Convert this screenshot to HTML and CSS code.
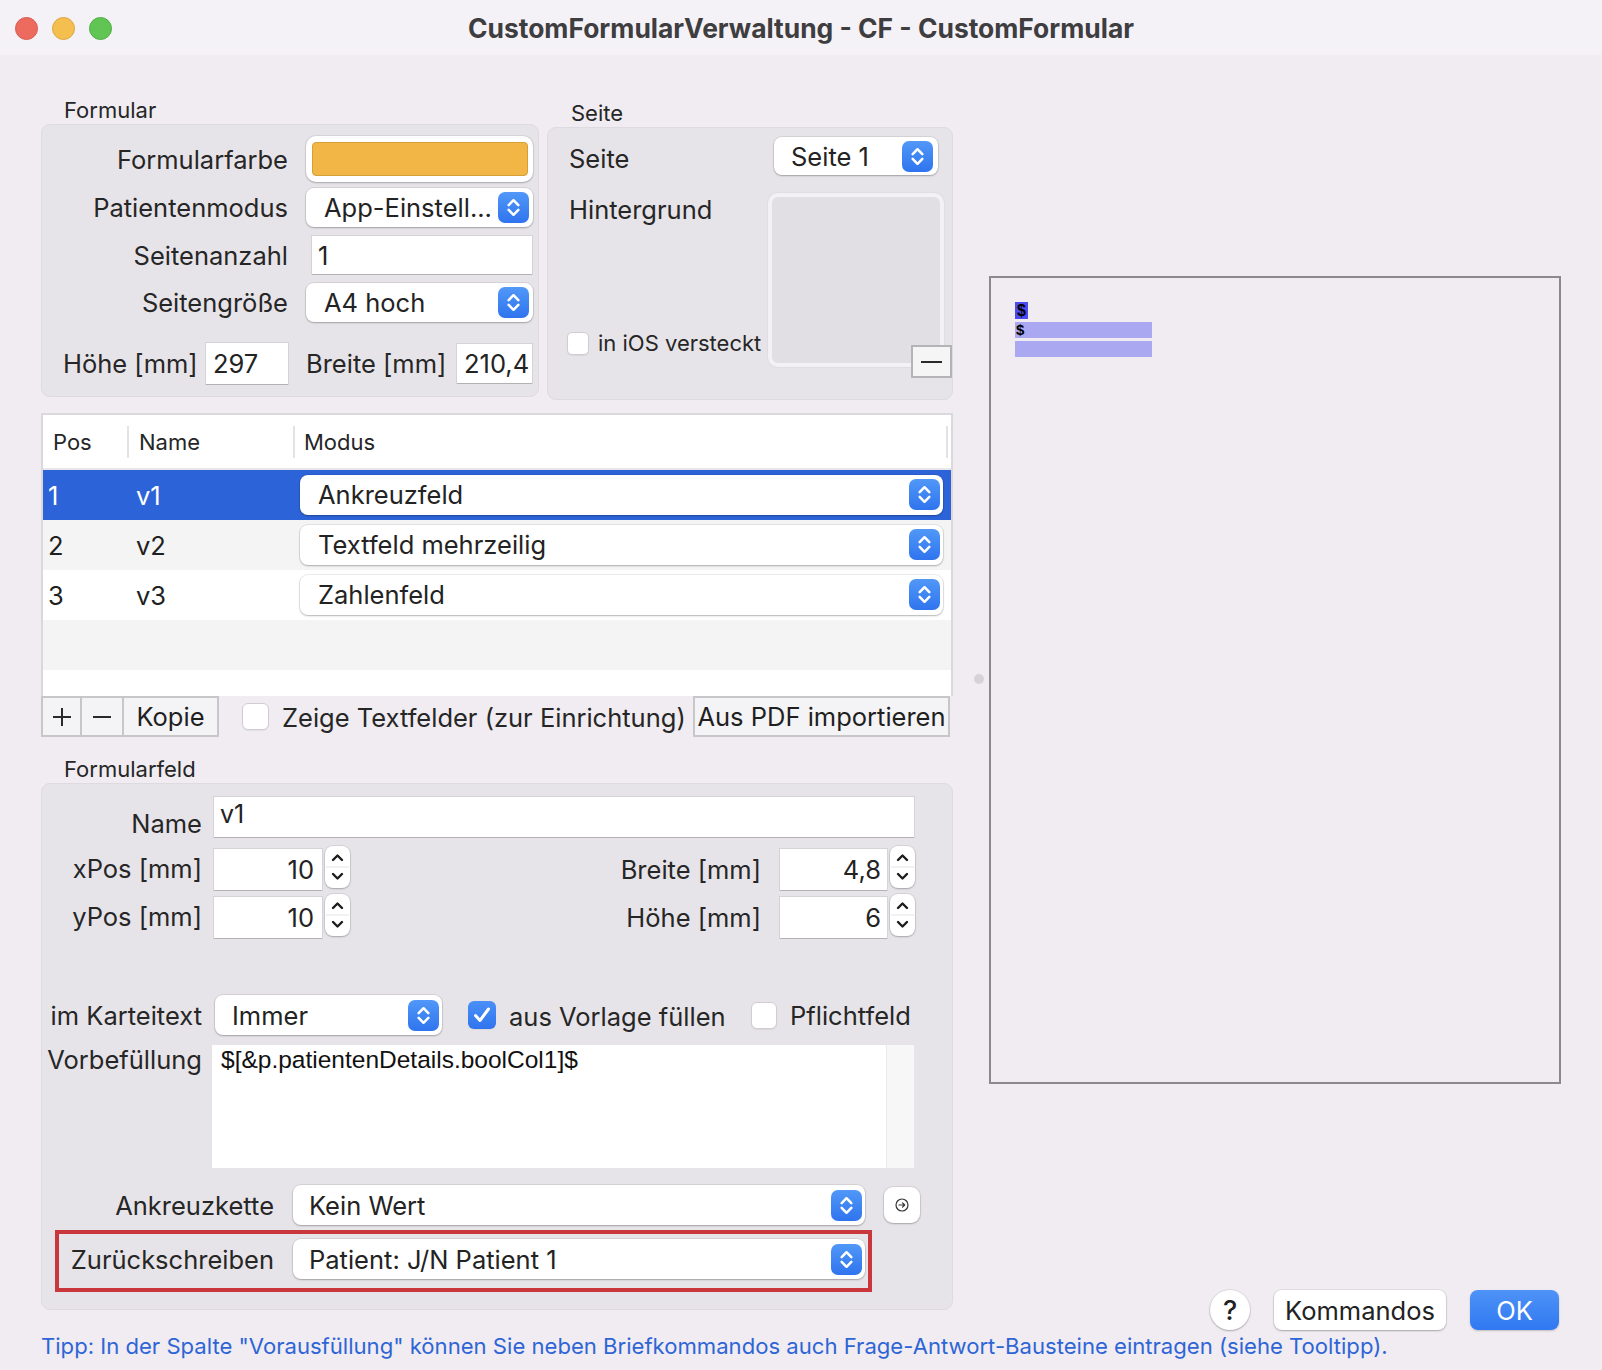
FILE: index.html
```html
<!DOCTYPE html>
<html lang="de">
<head>
<meta charset="utf-8">
<title>CustomFormularVerwaltung - CF - CustomFormular</title>
<link rel="stylesheet" href="styles.css">
</head>
<body>
<div class="window">
  <header class="titlebar">
    <div class="lights">
      <span class="light red"></span><span class="light yellow"></span><span class="light green"></span>
    </div>
    <div class="title">CustomFormularVerwaltung - CF - CustomFormular</div>
    <div></div>
  </header>

  <div class="content">
    <div class="leftcol">
      <div class="toprow">
        <section class="sec-formular">
          <div class="sec-label">Formular</div>
          <div class="box box-formular">
            <div class="frow r1"><span class="lbl">Formularfarbe</span><div class="ctl colorwell"><div class="swatch"></div></div></div>
            <div class="frow r2"><span class="lbl">Patientenmodus</span>
              <div class="ctl popup"><span class="ptxt">App-Einstell...</span><span class="arrows"><svg viewBox="0 0 32 32" width="31" height="31"><path d="M11 13.5 L16 8.5 L21 13.5 M11 18.5 L16 23.5 L21 18.5" fill="none" stroke="#fff" stroke-width="2.6" stroke-linecap="round" stroke-linejoin="round"/></svg></span></div>
            </div>
            <div class="frow r3"><span class="lbl">Seitenanzahl</span><div class="ctl tf tf-anz">1</div></div>
            <div class="frow r4"><span class="lbl">Seitengröße</span>
              <div class="ctl popup"><span class="ptxt">A4 hoch</span><span class="arrows"><svg viewBox="0 0 32 32" width="31" height="31"><path d="M11 13.5 L16 8.5 L21 13.5 M11 18.5 L16 23.5 L21 18.5" fill="none" stroke="#fff" stroke-width="2.6" stroke-linecap="round" stroke-linejoin="round"/></svg></span></div>
            </div>
            <div class="frow r5">
              <span class="lbl-h">Höhe [mm]</span>
              <div class="tf tf-h">297</div>
              <span class="lbl-b">Breite [mm]</span>
              <div class="tf tf-b">210,4</div>
            </div>
          </div>
        </section>

        <section class="sec-seite">
          <div class="sec-label sl-seite">Seite</div>
          <div class="box box-seite">
            <div class="seite-left">
              <span class="slbl">Seite</span>
              <span class="slbl slbl2">Hintergrund</span>
              <div class="ios"><span class="cb cb-small"></span><span>in iOS versteckt</span></div>
            </div>
            <div class="seite-right">
              <div class="popup seite-pop"><span class="ptxt">Seite 1</span><span class="arrows"><svg viewBox="0 0 32 32" width="31" height="31"><path d="M11 13.5 L16 8.5 L21 13.5 M11 18.5 L16 23.5 L21 18.5" fill="none" stroke="#fff" stroke-width="2.6" stroke-linecap="round" stroke-linejoin="round"/></svg></span></div>
              <div class="well">
                <div class="well-minus"><span class="mline"></span></div>
              </div>
            </div>
          </div>
        </section>
      </div>

      <div class="table">
        <div class="scroll">
          <div class="thead">
            <div class="th th-pos">Pos</div><span class="sep"></span>
            <div class="th th-name">Name</div><span class="sep"></span>
            <div class="th th-mod">Modus</div><span class="sep"></span>
          </div>
          <div class="trow sel">
            <div class="c-pos">1</div><div class="c-name">v1</div>
            <div class="c-mod"><div class="popup tpop"><span class="ptxt">Ankreuzfeld</span><span class="arrows"><svg viewBox="0 0 32 32" width="31" height="31"><path d="M11 13.5 L16 8.5 L21 13.5 M11 18.5 L16 23.5 L21 18.5" fill="none" stroke="#fff" stroke-width="2.6" stroke-linecap="round" stroke-linejoin="round"/></svg></span></div></div>
          </div>
          <div class="trow alt">
            <div class="c-pos">2</div><div class="c-name">v2</div>
            <div class="c-mod"><div class="popup tpop"><span class="ptxt">Textfeld mehrzeilig</span><span class="arrows"><svg viewBox="0 0 32 32" width="31" height="31"><path d="M11 13.5 L16 8.5 L21 13.5 M11 18.5 L16 23.5 L21 18.5" fill="none" stroke="#fff" stroke-width="2.6" stroke-linecap="round" stroke-linejoin="round"/></svg></span></div></div>
          </div>
          <div class="trow">
            <div class="c-pos">3</div><div class="c-name">v3</div>
            <div class="c-mod"><div class="popup tpop"><span class="ptxt">Zahlenfeld</span><span class="arrows"><svg viewBox="0 0 32 32" width="31" height="31"><path d="M11 13.5 L16 8.5 L21 13.5 M11 18.5 L16 23.5 L21 18.5" fill="none" stroke="#fff" stroke-width="2.6" stroke-linecap="round" stroke-linejoin="round"/></svg></span></div></div>
          </div>
          <div class="trow alt"></div>
        </div>
        <div class="tbar">
          <div class="bb bb-plus"><svg viewBox="0 0 20 20" width="20" height="20"><path d="M10 1 V19 M1 10 H19" stroke="#2a2a2a" stroke-width="2"/></svg></div>
          <div class="bb bb-minus"><svg viewBox="0 0 20 20" width="20" height="20"><path d="M1 10 H19" stroke="#2a2a2a" stroke-width="2"/></svg></div>
          <div class="bb bb-kopie">Kopie</div>
          <span class="cb cb-bar"></span>
          <span class="tbar-lbl">Zeige Textfelder (zur Einrichtung)</span>
          <div class="bb bb-pdf">Aus PDF importieren</div>
        </div>
      </div>

      <section class="sec-feld">
        <div class="sec-label">Formularfeld</div>
        <div class="box box-feld">
          <div class="nrow">
            <span class="flbl">Name</span>
            <div class="tf tf-name">v1</div>
          </div>
          <div class="posrow pr1">
            <span class="flbl">xPos [mm]</span>
            <div class="tf numf">10</div>
            <span class="stepper"><svg viewBox="0 0 25 42" width="25" height="42"><path d="M8 14 L12.5 9.5 L17 14 M8 28 L12.5 32.5 L17 28" fill="none" stroke="#1c1c1c" stroke-width="2.4" stroke-linecap="round" stroke-linejoin="round"/><path d="M1 21 H24" stroke="#e4e4e4" stroke-width="1"/></svg></span>
            <span class="flbl-r">Breite [mm]</span>
            <div class="tf numf numf2">4,8</div>
            <span class="stepper"><svg viewBox="0 0 25 42" width="25" height="42"><path d="M8 14 L12.5 9.5 L17 14 M8 28 L12.5 32.5 L17 28" fill="none" stroke="#1c1c1c" stroke-width="2.4" stroke-linecap="round" stroke-linejoin="round"/><path d="M1 21 H24" stroke="#e4e4e4" stroke-width="1"/></svg></span>
          </div>
          <div class="posrow pr2">
            <span class="flbl">yPos [mm]</span>
            <div class="tf numf">10</div>
            <span class="stepper"><svg viewBox="0 0 25 42" width="25" height="42"><path d="M8 14 L12.5 9.5 L17 14 M8 28 L12.5 32.5 L17 28" fill="none" stroke="#1c1c1c" stroke-width="2.4" stroke-linecap="round" stroke-linejoin="round"/><path d="M1 21 H24" stroke="#e4e4e4" stroke-width="1"/></svg></span>
            <span class="flbl-r">Höhe [mm]</span>
            <div class="tf numf numf2">6</div>
            <span class="stepper"><svg viewBox="0 0 25 42" width="25" height="42"><path d="M8 14 L12.5 9.5 L17 14 M8 28 L12.5 32.5 L17 28" fill="none" stroke="#1c1c1c" stroke-width="2.4" stroke-linecap="round" stroke-linejoin="round"/><path d="M1 21 H24" stroke="#e4e4e4" stroke-width="1"/></svg></span>
          </div>
          <div class="krow">
            <span class="flbl">im Karteitext</span>
            <div class="popup kpop"><span class="ptxt">Immer</span><span class="arrows"><svg viewBox="0 0 32 32" width="31" height="31"><path d="M11 13.5 L16 8.5 L21 13.5 M11 18.5 L16 23.5 L21 18.5" fill="none" stroke="#fff" stroke-width="2.6" stroke-linecap="round" stroke-linejoin="round"/></svg></span></div>
            <span class="cb cb-on"><svg viewBox="0 0 28 28" width="28" height="28"><path d="M7.5 14.5 L12 19.5 L20.5 8" fill="none" stroke="#fff" stroke-width="3" stroke-linecap="round" stroke-linejoin="round"/></svg></span>
            <span class="k-lbl">aus Vorlage füllen</span>
            <span class="cb cb-pf"></span>
            <span class="k-lbl2">Pflichtfeld</span>
          </div>
          <div class="vrow">
            <span class="flbl vlbl">Vorbefüllung</span>
            <div class="textarea">
              <div class="ta-text">$[&amp;p.patientenDetails.boolCol1]$</div>
              <div class="ta-scroll"></div>
            </div>
          </div>
          <div class="arow">
            <span class="albl">Ankreuzkette</span>
            <div class="popup apop"><span class="ptxt">Kein Wert</span><span class="arrows"><svg viewBox="0 0 32 32" width="31" height="31"><path d="M11 13.5 L16 8.5 L21 13.5 M11 18.5 L16 23.5 L21 18.5" fill="none" stroke="#fff" stroke-width="2.6" stroke-linecap="round" stroke-linejoin="round"/></svg></span></div>
            <div class="gobtn"><svg viewBox="0 0 16 16" width="16" height="16"><circle cx="8" cy="8" r="6" fill="none" stroke="#333" stroke-width="1.2"/><path d="M5 8 H10.5 M8.5 5.8 L10.7 8 L8.5 10.2" fill="none" stroke="#333" stroke-width="1.2" stroke-linecap="round" stroke-linejoin="round"/></svg></div>
          </div>
          <div class="redbox">
            <span class="albl rlbl">Zurückschreiben</span>
            <div class="popup apop"><span class="ptxt">Patient: J/N Patient 1</span><span class="arrows"><svg viewBox="0 0 32 32" width="31" height="31"><path d="M11 13.5 L16 8.5 L21 13.5 M11 18.5 L16 23.5 L21 18.5" fill="none" stroke="#fff" stroke-width="2.6" stroke-linecap="round" stroke-linejoin="round"/></svg></span></div>
          </div>
        </div>
      </section>
    </div>

    <div class="splitter"><span class="dot"></span></div>

    <div class="rightcol">
      <div class="preview">
        <div class="pv-sq">$</div>
        <div class="pv-bar pv-b1">$</div>
        <div class="pv-bar pv-b2"></div>
      </div>
      <div class="buttons">
        <div class="help">?</div>
        <div class="btn">Kommandos</div>
        <div class="btn btn-ok">OK</div>
      </div>
    </div>
  </div>

  <div class="tip">Tipp: In der Spalte "Vorausfüllung" können Sie neben Briefkommandos auch Frage-Antwort-Bausteine eintragen (siehe Tooltipp).</div>
</div>
</body>
</html>
```

FILE: styles.css
```css
* { box-sizing: border-box; }
html, body { margin: 0; padding: 0; }
body {
  width: 1602px;
  height: 1370px;
  overflow: hidden;
  background: #f0ecf1;
  font-family: Inter, "Noto Sans", "Liberation Sans", sans-serif;
  color: #262626;
}
.window { width: 1602px; height: 1370px; background: #f0ecf1; }

/* title bar */
.titlebar {
  height: 55px;
  background: #f5f2f7;
  display: grid;
  grid-template-columns: 1fr auto 1fr;
  align-items: center;
}
.lights { display: flex; gap: 14px; padding-left: 15px; padding-top: 1px; }
.light { width: 23px; height: 23px; border-radius: 50%; display: block; }
.red { background: #ed6a5e; border: 1px solid #d85b50; }
.yellow { background: #f5bf4f; border: 1px solid #dca540; }
.green { background: #61c554; border: 1px solid #51ad44; }
.title { font-size: 26.4px; font-weight: 700; color: #3e3d40; }

/* layout */
.content { display: flex; padding: 42px 0 0 41px; }
.leftcol { width: 912px; display: flex; flex-direction: column; }
.splitter { width: 36px; padding-top: 577px; }
.dot { display: block; width: 10px; height: 10px; border-radius: 50%; background: #d6d3d8; margin-left: 21px; }
.rightcol { width: 572px; display: flex; flex-direction: column; }

.toprow { display: flex; gap: 8px; }
.sec-formular { width: 498px; }
.sec-seite { width: 406px; margin-top: 3px; }
.sec-label { font-size: 22px; line-height: 26px; height: 26px; padding-left: 23px; margin-bottom: 1px; color: #262626; }
.sl-seite { padding-left: 24px; }

.box { background: #e7e4e9; border: 1px solid #dddae0; border-radius: 9px; }

/* Formular box */
.box-formular { height: 273px; padding-top: 11px; }
.frow { display: flex; align-items: center; }
.frow .lbl { width: 246px; text-align: right; font-size: 25.5px; white-space: nowrap; }
.frow .ctl { margin-left: 18px; width: 227px; height: 100%; }
.r1 { height: 46px; }
.r2 { height: 39px; margin-top: 6px; }
.r3 { height: 38px; margin-top: 9px; }
.r4 { height: 39px; margin-top: 9px; }
.r5 { height: 41px; margin-top: 21px; padding-left: 21px; font-size: 25.5px; }

.colorwell {
  background: #fff;
  border-radius: 10px;
  box-shadow: 0 0 0 1px rgba(0,0,0,0.06), 0 1px 2px rgba(0,0,0,0.22);
  padding: 6px 5px 6px 6px;
}
.swatch { width: 100%; height: 100%; background: #f1b646; border: 1px solid #d59f3a; border-radius: 4px; }

.popup {
  display: flex;
  align-items: center;
  background: #fff;
  border-radius: 8px;
  box-shadow: 0 0 0 1px rgba(0,0,0,0.07), 0 1px 2px rgba(0,0,0,0.24);
  padding-left: 18px;
  padding-right: 4px;
  font-size: 25.5px;
  color: #232323;
}
.ptxt { flex: 1; white-space: nowrap; overflow: hidden; }
.arrows {
  width: 31px; height: 31px; border-radius: 7px;
  background: linear-gradient(#5198f8, #2f74ee);
  display: block;
  flex: none;
}
.arrows svg { display: block; }

.tf {
  background: #fff;
  box-shadow: 0 0 0 1px rgba(0,0,0,0.07), 0 1px 0 rgba(0,0,0,0.16);
  font-size: 25.5px;
  display: flex;
  align-items: center;
  padding-left: 6px;
  color: #232323;
  white-space: nowrap;
}
.frow .tf-anz { margin-left: 24px; width: 220px; }
.lbl-h { width: 143px; white-space: nowrap; }
.tf-h { width: 82px; height: 41px; padding-left: 7px; }
.lbl-b { width: 139px; margin-left: 18px; white-space: nowrap; }
.tf-b { width: 75px; height: 39px; margin-left: 12px; padding-left: 7px; overflow: hidden; }

/* Seite box */
.box-seite { height: 273px; display: flex; }
.seite-left { flex: 1; padding-left: 21px; padding-top: 16px; display: flex; flex-direction: column; }
.slbl { font-size: 25.5px; line-height: 30px; white-space: nowrap; }
.slbl2 { margin-top: 21px; }
.ios { margin-top: 106px; margin-left: -2px; display: flex; align-items: center; gap: 9px; font-size: 22px; height: 24px; white-space: nowrap; }
.cb { display: block; background: #fff; border: 1px solid #cfcdd1; border-radius: 6px; box-shadow: 0 1px 1px rgba(0,0,0,0.06); flex: none; }
.cb-small { width: 22px; height: 23px; border-radius: 5px; }
.seite-right { width: 176px; margin-right: 8px; padding-top: 9px; }
.seite-pop { margin-left: 6px; width: 164px; height: 38px; padding-left: 17px; padding-right: 5px; }
.well {
  margin-top: 18px;
  height: 174px;
  position: relative;
  border-radius: 10px;
  background: #e1dfe3;
  border: 4px solid #f3f1f5;
  box-shadow: 0 0 0 1px #e0dde2;
}
.well-minus {
  position: absolute;
  left: 139px; top: 148px;
  width: 41px; height: 33px;
  background: #f5f5f6;
  border: 2px solid #b4b3b6;
  display: flex; align-items: center; justify-content: center;
}
.mline { display: block; width: 21px; height: 2px; background: #2a2a2a; }

/* table */
.table { margin-top: 13px; height: 324px; display: flex; flex-direction: column; }
.scroll {
  height: 283px;
  background: #fff;
  border: 2px solid #d9d8da;
  border-bottom: none;
  overflow: hidden;
}
.thead { height: 55px; display: flex; align-items: center; border-bottom: 2px solid #e7e6e8; font-size: 22px; }
.th { white-space: nowrap; }
.th-pos { width: 84px; padding-left: 10px; }
.th-name { width: 164px; padding-left: 10px; }
.th-mod { width: 651px; padding-left: 9px; }
.sep { display: block; width: 2px; height: 32px; background: #e3e2e4; }
.trow { height: 50px; display: flex; align-items: center; font-size: 25.5px; color: #1f1f1f; }
.trow.alt { background: #f4f4f5; }
.trow.sel { background: #2c63d8; color: #fff; }
.c-pos { width: 84px; padding-left: 5px; }
.c-name { width: 166px; padding-left: 9px; }
.c-mod { flex: 1; }
.tpop { margin-left: 7px; width: 643px; height: 40px; padding-right: 3px; padding-bottom: 1px; }

.tbar { height: 41px; display: flex; align-items: center; font-size: 25.5px; }
.bb {
  height: 41px;
  border: 2px solid #c7c6c9;
  background: #f4f3f5;
  display: flex; align-items: center; justify-content: center;
  color: #1f1f1f;
  white-space: nowrap;
}
.bb svg { display: block; }
.bb-plus { width: 41px; }
.bb-minus { width: 42px; border-left: none; }
.bb-kopie { width: 95px; border-left: none; }
.cb-bar { width: 27px; height: 27px; margin-left: 23px; }
.tbar-lbl { margin-left: 13px; white-space: nowrap; padding-top: 2px; }
.bb-pdf { width: 257px; margin-left: auto; margin-right: 3px; }

/* Formularfeld */
.sec-feld { margin-top: 19px; }
.box-feld { height: 527px; padding-top: 13px; font-size: 25.5px; }
.flbl { width: 160px; text-align: right; white-space: nowrap; flex: none; }
.nrow { display: flex; align-items: center; height: 40px; }
.nrow .flbl { padding-top: 12px; }
.tf-name { margin-left: 12px; width: 700px; height: 40px; align-items: flex-start; padding-top: 2px; font-size: 25px; }

.posrow { display: flex; height: 44px; align-items: center; }
.pr1 { margin-top: 9px; }
.pr2 { margin-top: 4px; }
.numf { margin-left: 12px; width: 108px; height: 41px; justify-content: flex-end; padding-right: 8px; align-self: flex-end; }
.numf2 { margin-left: 19px; width: 107px; padding-right: 6px; }
.stepper {
  display: block; width: 25px; height: 42px; margin-left: 3px;
  background: #fff; border-radius: 8px;
  box-shadow: 0 0 0 1px rgba(0,0,0,0.07), 0 1px 2px rgba(0,0,0,0.22);
  align-self: flex-start;
}
.stepper svg { display: block; }
.flbl-r { width: 200px; margin-left: 211px; text-align: right; white-space: nowrap; padding-top: 2px; }

.krow { display: flex; align-items: center; height: 40px; margin-top: 57px; }
.kpop { margin-left: 13px; width: 227px; height: 40px; padding-left: 17px; padding-right: 3px; }
.cb-on { width: 28px; height: 28px; margin-left: 26px; background: linear-gradient(#4a90f7, #2f74ee); border: none; border-radius: 6px; }
.cb-on svg { display: block; }
.k-lbl { width: 242px; margin-left: 13px; white-space: nowrap; padding-top: 3px; }
.cb-pf { width: 26px; height: 27px; }
.k-lbl2 { margin-left: 13px; white-space: nowrap; }

.vrow { display: flex; align-items: flex-start; margin-top: 10px; }
.vlbl { line-height: 30px; }
.textarea { margin-left: 10px; width: 702px; height: 123px; background: #fff; display: flex; }
.ta-text { flex: 1; font-size: 24.5px; line-height: 28px; padding-left: 9px; padding-top: 1px; color: #111; font-family: "Liberation Sans", Arial, sans-serif; }
.ta-scroll { width: 28px; background: #f7f7f7; border-left: 1px solid #ebebeb; }

.arow { display: flex; align-items: center; height: 40px; margin-top: 17px; }
.albl { width: 232px; text-align: right; white-space: nowrap; flex: none; }
.apop { margin-left: 19px; width: 572px; height: 40px; padding-left: 16px; padding-right: 3px; }
.gobtn {
  width: 36px; height: 36px; margin-left: 19px;
  background: #fff; border-radius: 9px;
  box-shadow: 0 0 0 1px rgba(0,0,0,0.07), 0 1px 2px rgba(0,0,0,0.22);
  display: flex; align-items: center; justify-content: center;
}
.gobtn svg { display: block; }

.redbox {
  margin-top: 5px; margin-left: 13px;
  width: 817px; height: 62px;
  border: 4px solid #c9363c;
  display: flex; align-items: center;
  padding-bottom: 4px;
}
.rlbl { width: 215px; }

/* right column */
.preview { margin-top: 179px; height: 808px; border: 2px solid #8b898d; position: relative; }
.pv-sq {
  position: absolute; left: 24px; top: 24px;
  width: 13px; height: 17px; background: #4b4bf1;
  font: 700 16px/17px "Liberation Sans", Arial, sans-serif; color: #000; text-align: center;
}
.pv-bar {
  position: absolute; left: 24px;
  width: 137px; height: 16px; background: #aaa8f1;
  font: 700 15px/16px "Liberation Sans", Arial, sans-serif; color: #000; padding-left: 1px;
}
.pv-b1 { top: 44px; }
.pv-b2 { top: 63px; }

.buttons { margin-top: 206px; height: 40px; display: flex; justify-content: flex-end; align-items: center; gap: 24px; padding-right: 2px; }
.help {
  width: 40px; height: 40px; border-radius: 50%;
  background: #fff;
  box-shadow: 0 0 0 1px rgba(0,0,0,0.06), 0 1px 2px rgba(0,0,0,0.25);
  display: flex; align-items: center; justify-content: center;
  font-size: 27px; font-weight: 500; color: #222;
}
.btn {
  height: 40px; width: 172px; border-radius: 8px;
  background: #fff;
  box-shadow: 0 0 0 1px rgba(0,0,0,0.06), 0 1px 2px rgba(0,0,0,0.25);
  display: flex; align-items: center; justify-content: center;
  font-size: 25.5px; color: #222;
}
.btn-ok { width: 89px; background: linear-gradient(#4e93f7, #3078f1); color: #fff; box-shadow: 0 1px 2px rgba(0,0,0,0.2); }

.tip { margin-top: 4px; padding-left: 41px; font-size: 22.1px; line-height: 24px; color: #2e65d6; white-space: nowrap; }
```
